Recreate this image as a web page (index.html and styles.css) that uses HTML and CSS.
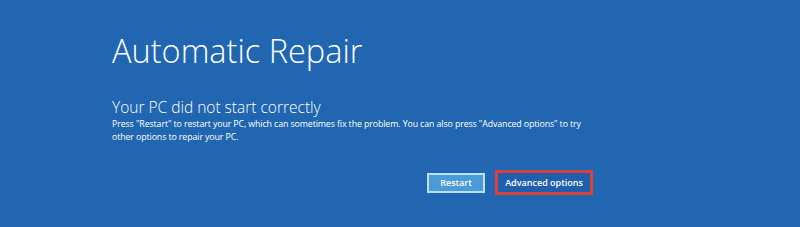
FILE: index.html
```html
<!DOCTYPE html>
<html lang="en">
<head>
    <meta charset="UTF-8">
    <title>Automatic Repair</title>
    <link rel="stylesheet" href="styles.css">
</head>
<body>
    <div class="screen">
        <h1 class="title">Automatic Repair</h1>
        <h2 class="subtitle">Your PC did not start correctly</h2>
        <p class="message">Press "Restart" to restart your PC, which can sometimes fix the problem. You can also press "Advanced options" to try other options to repair your PC.</p>
        <div class="actions">
            <button class="btn btn-primary">Restart</button>
            <button class="btn btn-marked">Advanced options</button>
        </div>
    </div>
</body>
</html>
```

FILE: styles.css
```css
html,
body {
    margin: 0;
    padding: 0;
}

body {
    width: 800px;
    height: 227px;
    background: #2166b1;
    font-family: "Open Sans", "Liberation Sans", sans-serif;
    color: #fff;
    overflow: hidden;
}

.screen {
    padding: 29px 0 0 112px;
    width: 481px;
}

.title {
    margin: 0;
    font-size: 32.5px;
    font-weight: 300;
    line-height: 44px;
}

.subtitle {
    margin: 24px 0 0 0;
    font-size: 15.5px;
    font-weight: 300;
    line-height: 20px;
}

.message {
    margin: 1px 0 0 0;
    width: 472px;
    font-size: 8.8px;
    line-height: 12.5px;
    letter-spacing: -0.1px;
}

.actions {
    display: flex;
    justify-content: flex-end;
    align-items: center;
    gap: 10px;
    margin-top: 27px;
}

.btn {
    font-family: inherit;
    font-size: 9px;
    font-weight: 600;
    color: #fff;
    padding: 0;
    cursor: pointer;
    white-space: nowrap;
}

.btn-primary {
    background: #4b9ad8;
    border: 2px solid #bde0f5;
    height: 20px;
    width: 58px;
}

.btn-marked {
    background: #1e5fae;
    border: 3px solid #d9423a;
    width: 98px;
    height: 25px;
}
```
